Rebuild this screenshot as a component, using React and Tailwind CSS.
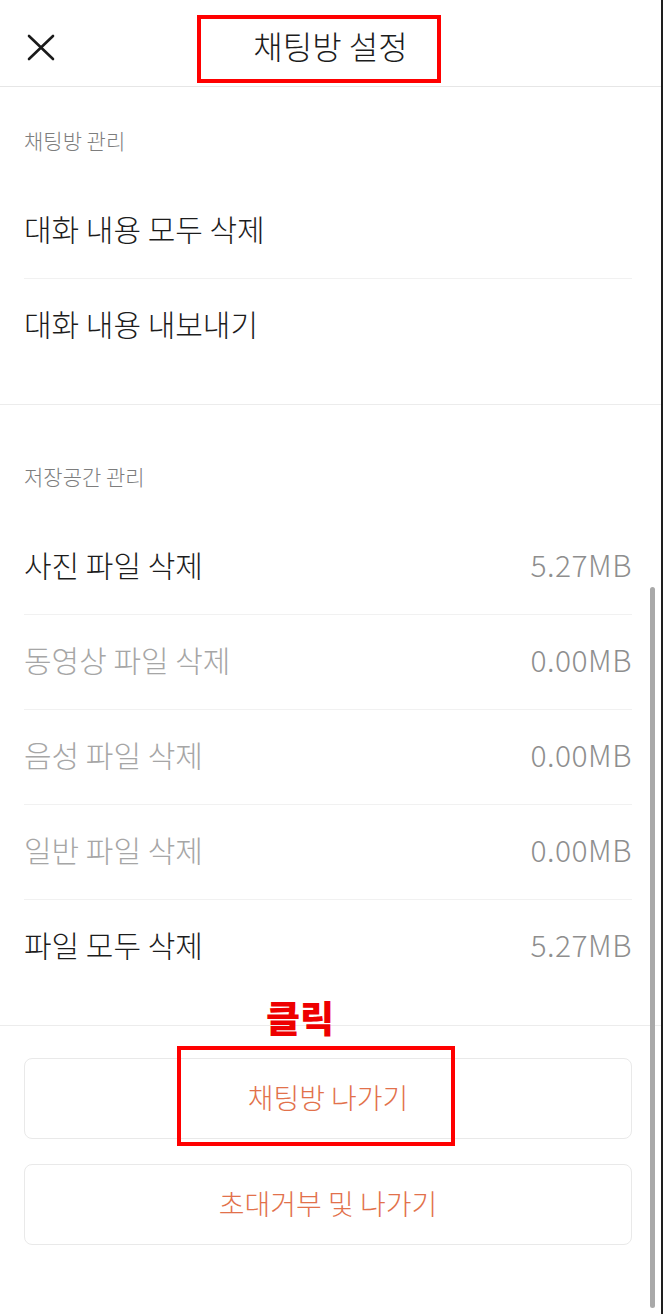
const font = { fontFamily: '"Noto Sans CJK KR", "Noto Sans", sans-serif' };

const chatItems = ["대화 내용 모두 삭제", "대화 내용 내보내기"];

const storageItems = [
  { label: "사진 파일 삭제", size: "5.27MB", active: true },
  { label: "동영상 파일 삭제", size: "0.00MB", active: false },
  { label: "음성 파일 삭제", size: "0.00MB", active: false },
  { label: "일반 파일 삭제", size: "0.00MB", active: false },
  { label: "파일 모두 삭제", size: "5.27MB", active: true },
];

const Row = ({ label, size, active = true, last }) => (
  <div
    className={`box-content flex h-[89px] items-center justify-between pb-[5px] ${
      last ? "" : "border-b border-[#f1f1f1]"
    }`}
  >
    <span
      className={`text-[30px] font-light ${
        active ? "text-[#1c1c1c]" : "text-[#a6a6a6]"
      }`}
    >
      {label}
    </span>
    {size && (
      <span className="text-[30px] font-light tracking-[0.5px] text-[#8e8e8e]">
        {size}
      </span>
    )}
  </div>
);

const App = () => {
  return (
    <div
      style={font}
      className="relative min-h-[1314px] w-[663px] overflow-hidden border-r-2 border-[#1e1e1e] bg-white"
    >
      {/* HEADER */}
      <header className="relative flex h-[87px] items-center justify-center border-b border-[#e6e6e6]">
        <svg
          className="absolute left-[27px] top-[34px]"
          width="28"
          height="27"
          viewBox="0 0 28 27"
          fill="none"
          stroke="#1a1a1a"
          strokeWidth="2.6"
          strokeLinecap="round"
        >
          <path d="M2 2 L26 25" />
          <path d="M26 2 L2 25" />
        </svg>
        <h1 className="mt-[3px] text-[32px] font-light text-[#1c1c1c]">
          채팅방 설정
        </h1>
      </header>

      {/* CHAT ROOM */}
      <section className="border-b border-[#ececec] pb-[31px] pl-6 pr-[29px] pt-[40px]">
        <p className="text-[21px] leading-[26px] font-light text-[#7d7d7d]">
          채팅방 관리
        </p>
        <div className="mt-[31px]">
          {chatItems.map((item, i) => (
            <Row key={item} label={item} last={i === chatItems.length - 1} />
          ))}
        </div>
      </section>

      {/* STORAGE */}
      <section className="border-b border-[#ececec] pb-[31px] pl-6 pr-[29px] pt-[58px]">
        <p className="text-[21px] leading-[26px] font-light text-[#7d7d7d]">
          저장공간 관리
        </p>
        <div className="mt-[31px]">
          {storageItems.map((item, i) => (
            <Row
              key={item.label}
              {...item}
              last={i === storageItems.length - 1}
            />
          ))}
        </div>
      </section>

      {/* BUTTONS */}
      <section className="flex flex-col gap-[25px] pl-6 pr-[29px] pt-[32px]">
        <button className="flex h-[81px] items-center justify-center rounded-lg border border-[#e9e9e9] pb-[3px] text-[28px] font-light text-[#e2714b]">
          채팅방 나가기
        </button>
        <button className="flex h-[81px] items-center justify-center rounded-lg border border-[#e9e9e9] pb-[3px] text-[28px] font-light text-[#e2714b]">
          초대거부 및 나가기
        </button>
      </section>

      {/* ANNOTATIONS */}
      <div className="pointer-events-none absolute left-[197px] top-[15px] h-[68px] w-[244px] border-4 border-[#ff0000]" />
      <div className="pointer-events-none absolute left-[177px] top-[1046px] h-[100px] w-[278px] border-4 border-[#ff0000]" />
      <span className="absolute left-[266px] top-[992px] text-[37px] font-black leading-[50px] text-[#ee0000]">
        클릭
      </span>

      {/* SCROLLBAR */}
      <div className="absolute left-[650px] top-[587px] h-[721px] w-[5px] rounded-full bg-[#a9a9a9]" />
    </div>
  );
};

export default App;
